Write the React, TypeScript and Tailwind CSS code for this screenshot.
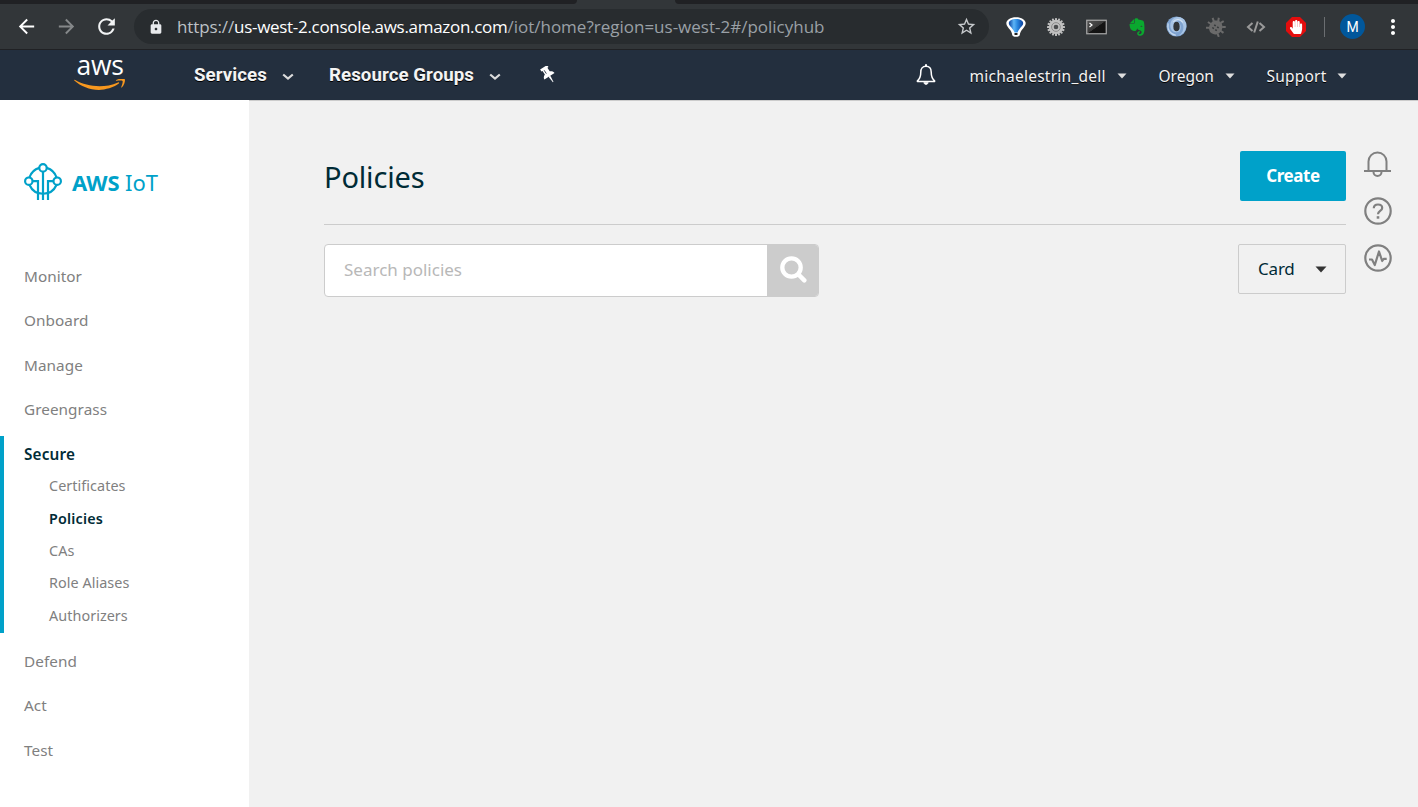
import React from "react";
import { MdArrowBack, MdArrowForward, MdRefresh, MdLock, MdStarBorder, MdMoreVert } from "react-icons/md";
import { FaEvernote, FaHandPaper } from "react-icons/fa";

function BalloonIcon() {
  return (
    <svg width="20" height="20" viewBox="0 0 20 20">
      <defs>
        <linearGradient id="balloon" x1="0" x2="1">
          <stop offset="0" stopColor="#0a3f9c" />
          <stop offset="0.35" stopColor="#5db5f7" />
          <stop offset="0.6" stopColor="#2a86de" />
          <stop offset="1" stopColor="#0a3f9c" />
        </linearGradient>
      </defs>
      <path d="M10 .2C4.500 .2 .3 2.900 .3 6.300c0 2.300 2 4.500 3.700 6.500 1 1.300 1.900 2.900 2.200 4.900.3 1.500 1.500 2.100 3.800 2.100s3.500-.6 3.800-2.100c.3-2 1.200-3.600 2.200-4.900 1.700-2 3.700-4.200 3.700-6.500C19.700 2.900 15.500.2 10 .2z" fill="#fff" />
      <path d="M10 2C5.600 2 2.800 3.900 2.800 6.300c0 1.900 2 3.500 3.700 5.600 1 1.200 1.600 2.500 2 3.700h3c.4-1.200 1-2.500 2-3.700 1.700-2.100 3.700-3.700 3.700-5.600C17.200 3.900 14.400 2 10 2z" fill="url(#balloon)" />
      <rect x="8.500" y="16" width="3" height="2" fill="#222" />
    </svg>
  );
}

const spokes = [0, 22.5, 45, 67.5, 90, 112.5, 135, 157.5];

function GearIcon() {
  return (
    <svg width="20" height="20" viewBox="0 0 20 20">
      {spokes.map((a) => (
        <rect key={a} x="9" y="1" width="2" height="18" rx=".6" fill="#bdbdbd" transform={`rotate(${a} 10 10)`} />
      ))}
      <circle cx="10" cy="10" r="7.200" fill="#c0c0c0" />
      <circle cx="10" cy="10" r="4.400" fill="none" stroke="#8d8d8d" strokeWidth="1" />
      <circle cx="10" cy="10" r="2.300" fill="#4b4d4f" />
    </svg>
  );
}

function TerminalIcon() {
  return (
    <svg width="22" height="16" viewBox="0 0 22 16">
      <defs>
        <linearGradient id="term" x1="0" y1="0" x2="1" y2="1">
          <stop offset="0" stopColor="#555" />
          <stop offset=".5" stopColor="#3a3a3a" />
          <stop offset=".52" stopColor="#141414" />
          <stop offset="1" stopColor="#111" />
        </linearGradient>
      </defs>
      <rect x=".75" y="1.250" width="19.500" height="13.500" fill="url(#term)" stroke="#a9a9a9" strokeWidth="1.200" />
      <path d="M3.500 4 6 6 3.500 8" stroke="#fff" strokeWidth="1.200" fill="none" />
    </svg>
  );
}

function SwirlIcon() {
  return (
    <svg width="21" height="21" viewBox="0 0 20 20">
      <circle cx="10" cy="10" r="9.600" fill="#7fa3d0" />
      <path d="M13 14.500C9.500 17 5 15 4.200 10.500 3.500 6 6 2 10.500 1 17 .4 20 6 19.300 10.500 18 16 15 18 12 18.500c3.500-2 5-5 4.500-9C16 6 13 3.500 10 5c3 .5 4 3.500 4 5.500 0 1.500-.3 3-1 4z" fill="#a9c5e5" />
      <path d="M7 5.500C9.500 2.500 13.500 2.500 16 6" fill="none" stroke="#d3e2f2" strokeWidth="1.100" />
      <path d="M2 7c-1 6 2 10.500 7.500 11.300" fill="none" stroke="#c6d9ee" strokeWidth="1.100" />
      <ellipse cx="10" cy="10" rx="3" ry="4.600" fill="#323639" />
    </svg>
  );
}

function DebugBugIcon() {
  return (
    <svg width="20" height="20" viewBox="0 0 20 20">
      <g transform="rotate(35 10 10)" fill="#6a6a6a" stroke="#6a6a6a">
        <ellipse cx="10" cy="10.500" rx="6.500" ry="7.200" stroke="none" />
        <path d="M2 4.500l3 2M18 4.500l-3 2M.5 10.500H5M15 10.500H19.500M2 16.500l3-2M18 16.500l-3-2M7 .8l1.500 3.200M13 .8l-1.500 3.200" strokeWidth="2" />
        <path d="M7.300 9.200h1.800M10.900 9.200h1.800M7.300 12.500h1.800M10.900 12.500h1.800" stroke="#35383a" strokeWidth="1.500" />
      </g>
    </svg>
  );
}

function CodeIcon() {
  return (
    <svg width="20" height="14" viewBox="0 0 20 14" fill="none" stroke="#9a9a9a" strokeWidth="2">
      <path d="M6.500 3 2 7l4.500 4M13.500 3 18 7l-4.500 4M11.800 1.500 8.200 12.500" />
    </svg>
  );
}

function BlockIcon() {
  return (
    <span className="relative flex h-[20px] w-[20px] items-center justify-center">
      <svg className="absolute inset-0" width="20" height="20" viewBox="0 0 20 20">
        <path d="M6 0h8l6 6v8l-6 6H6l-6-6V6z" fill="#e40d0d" />
      </svg>
      <FaHandPaper className="relative text-white" size={14} />
    </span>
  );
}

function HeaderBell() {
  return (
    <svg width="20" height="22" viewBox="0 0 20 22" fill="none" stroke="#fff" strokeWidth="1.500" strokeLinejoin="round">
      <path d="M10 2.200c-3.600 0-5.200 2.600-5.200 5.800 0 4.500-1 6.800-3.400 8.800v.7h17.200v-.7c-2.400-2-3.400-4.300-3.400-8.800 0-3.200-1.600-5.800-5.200-5.800z" />
      <path d="M10 .3v2" strokeWidth="2" />
      <path d="M7.800 18.500c.3 1.400 1.100 2 2.200 2s1.900-.6 2.200-2z" fill="#fff" strokeWidth=".6" />
    </svg>
  );
}

function PinIcon() {
  return (
    <svg width="17" height="18" viewBox="0 0 17 18">
      <g transform="rotate(-33 8 8)" fill="#fff">
        <path d="M3.800 0h8.400v2.400h-1.300v4.300c2 .8 3.100 2.100 3.100 4H2c0-1.900 1.100-3.200 3.100-4V2.400H3.800z" />
        <path d="M7 10.500h2L8.300 17.500h-.6z" />
        <path d="M6.800 2.800v4" stroke="#232f3e" strokeWidth=".8" />
      </g>
    </svg>
  );
}

function Chevron() {
  return (
    <svg width="12" height="8" viewBox="0 0 12 8" fill="none">
      <path d="M1.200 1.500 6 5.600l4.800-4.100" stroke="#dcdcdc" strokeWidth="2.200" />
    </svg>
  );
}

function Caret() {
  return (
    <svg width="10" height="6" viewBox="0 0 10 6" className="mt-[2px]">
      <path d="M.5.500h9L5 5.500z" fill="#dedede" />
    </svg>
  );
}

function AwsLogo() {
  return (
    <div className="flex w-[52px] flex-col items-center">
      <span className="-mt-px h-[23px] font-['Open_Sans',sans-serif] text-[26.5px] leading-[19px] font-medium tracking-[-0.3px] text-white">aws</span>
      <svg width="52" height="14" viewBox="0 0 52 14" fill="#f7981f">
        <path d="M.3 1.600C-.1 1.200.4.600 1.200 1c7 4 15.500 6.200 24.300 6.200 6 0 12.500-1.200 18.500-3.800 .9-.4 1.700.6.800 1.200-5.400 4-13.200 6.300-19.900 6.300C15.500 10.900 6.800 7.500.3 1.600z" />
        <path d="M46.500 2.200c-.7-.9-4.500-.4-6.200-.2-.5.1-.6-.4-.1-.7 3-2.100 8-1.500 8.600-.8.600.7-.2 5.700-3 8.100-.4.400-.8.200-.6-.3.600-1.600 2-5.200 1.300-6.100z" transform="translate(2 -.2)" />
      </svg>
    </div>
  );
}

function IotLogo() {
  return (
    <svg width="38" height="38" viewBox="0 0 38 38" fill="none" stroke="#00a1c9" strokeWidth="2.200">
      <path d="M15.300 4.900A14.800 14.800 0 0 0 5.500 14.400M22.700 4.900A14.800 14.800 0 0 1 32.500 14.400M5.500 22A14.800 14.800 0 0 0 32.500 22" />
      <circle cx="19" cy="4.900" r="3.700" />
      <circle cx="4.800" cy="18.200" r="3.700" />
      <circle cx="33.200" cy="18.200" r="3.700" />
      <path d="M19 8.300V37M8.100 18.200h5.900V37M29.900 18.200H24V37" />
    </svg>
  );
}

function SideBell() {
  return (
    <svg width="27" height="27" viewBox="0 0 27 27" fill="none" stroke="#808080" strokeWidth="2">
      <path d="M4.500 20V10.500a9 9 0 0 1 18 0V20M0 20h27" />
      <path d="M9.500 21a4 4 0 0 0 8 0" />
    </svg>
  );
}

function SideHelp() {
  return (
    <svg width="28" height="28" viewBox="0 0 28 28" fill="none" stroke="#808080" strokeWidth="2.200">
      <circle cx="14" cy="14" r="12.700" />
      <path d="M9.800 11.200c0-2.400 1.800-3.700 4.200-3.700s4.200 1.300 4.200 3.500c0 3-4.200 3-4.200 6.200" />
      <path d="M14 19.200v2.500" strokeWidth="2.600" />
    </svg>
  );
}

function SidePulse() {
  return (
    <svg width="28" height="28" viewBox="0 0 28 28" fill="none" stroke="#808080" strokeWidth="2.200">
      <circle cx="14" cy="14" r="12.700" />
      <path d="M5 15.500h3L10.800 21 15 7.500l3.200 9.500 1.500-2.200h3" strokeLinejoin="round" />
    </svg>
  );
}

function Toolbar() {
  return (
    <div className="flex h-[45px] items-center bg-[#323639]">
      <div className="flex w-[134px] items-center pl-[15px]">
        <MdArrowBack size={23} className="-mt-px text-white" />
        <MdArrowForward size={23} className="-mt-px ml-[17px] text-[#85888a]" />
        <MdRefresh size={25} className="-mt-px ml-[16px] text-[#f1f3f4]" />
      </div>
      <div className="flex h-[35px] w-[855px] items-center rounded-full bg-[#282c2f] pr-[12px] pl-[14px]">
        <MdLock size={16} className="text-[#e8eaed]" />
        <span className="ml-[13px] flex-1 font-['Open_Sans',sans-serif] text-[17px] leading-[24px] whitespace-nowrap text-[#9aa0a6]">
          <span className="tracking-[-0.12px] text-[#bdc1c6]">https://</span>
          <span className="tracking-[-0.3px] text-white">us-west-2.console.aws.amazon.com</span>
          <span className="tracking-[0]">/iot/home?region=us-west-2#/policyhub</span>
        </span>
        <MdStarBorder size={21} className="text-[#c6c9cc]" />
      </div>
      <div className="ml-[17px] flex items-center">
        <div className="flex w-[40px] items-center"><BalloonIcon /></div>
        <div className="flex w-[40px] items-center"><GearIcon /></div>
        <div className="flex w-[41px] items-center"><TerminalIcon /></div>
        <div className="flex w-[39px] items-center"><FaEvernote size={20} className="text-[#0aa82f]" /></div>
        <div className="flex w-[40px] items-center"><SwirlIcon /></div>
        <div className="flex w-[40px] items-center"><DebugBugIcon /></div>
        <div className="flex w-[40px] items-center"><CodeIcon /></div>
        <BlockIcon />
        <div className="ml-[18px] h-[20px] w-px bg-[#6b6e71]" />
        <div className="ml-[15px] flex h-[25px] w-[25px] items-center justify-center rounded-full bg-[#01579b] pt-px font-[Roboto,sans-serif] text-[14px] text-white">M</div>
        <MdMoreVert size={24} className="ml-[16px] text-white" />
      </div>
    </div>
  );
}

function ConsoleHeader() {
  return (
    <div className="flex h-[51px] items-center border-t border-[#202124] bg-[#232f3e] font-[Roboto,sans-serif] text-[18px] font-bold text-[#f4f4f4]">
      <div className="ml-[74px]"><AwsLogo /></div>
      <span className="ml-[68px] w-[88px] text-[18.7px] tracking-[0.05px] [text-shadow:0_1px_0_#000]">Services</span>
      <div className="mt-[3px]"><Chevron /></div>
      <span className="ml-[35px] w-[160px] text-[18.7px] tracking-[0.05px] [text-shadow:0_1px_0_#000]">Resource Groups</span>
      <div className="mt-[3px]"><Chevron /></div>
      <div className="ml-[39px]"><PinIcon /></div>
      <div className="flex-1" />
      <div className="flex w-[502px] items-center font-['Noto_Sans',sans-serif] text-[15.5px] font-normal text-[#f4f4f4] [text-shadow:0_1px_0_#000]">
        <HeaderBell />
        <span className="mt-[4px] ml-[33.5px] w-[147px] tracking-[0.25px]">michaelestrin_dell</span>
        <Caret />
        <span className="mt-[4px] ml-[32px] w-[66px]">Oregon</span>
        <Caret />
        <span className="mt-[4px] ml-[32px] w-[70.5px] tracking-[0.2px]">Support</span>
        <Caret />
      </div>
    </div>
  );
}

const topItems = ["Monitor", "Onboard", "Manage", "Greengrass"];
const subItems = ["Certificates", "Policies", "CAs", "Role Aliases", "Authorizers"];
const bottomItems = ["Defend", "Act", "Test"];

function NavRow({ label }: { label: string }) {
  return (
    <a className="flex h-[44.5px] items-center pl-[24px] text-[15.3px] tracking-[0.05px] text-[#808080]">{label}</a>
  );
}

function Sidebar() {
  return (
    <nav className="w-[249px] shrink-0 bg-white font-['Noto_Sans',sans-serif]">
      <div className="flex items-center pt-[63px] pl-[24px]">
        <IotLogo />
        <span className="ml-[10px] text-[22px] leading-[38px] tracking-[-0.1px] text-[#00a1c9]"><b>AWS</b> IoT</span>
      </div>
      <div className="mt-[53px]">
        {topItems.map((i) => <NavRow key={i} label={i} />)}
      </div>
      <div className="mt-[4px] h-[197px] border-l-4 border-[#00a1c9]">
        <div className="flex h-[34px] items-center pt-[3px] pl-[20px] text-[15.3px] font-semibold tracking-[0.15px] text-[#002b36]">Secure</div>
        {subItems.map((i) => (
          <a key={i} className={i === "Policies" ? "flex h-[32.5px] items-center pb-px pl-[45px] text-[14.3px] font-semibold tracking-[0.2px] text-[#002b36]" : "flex h-[32.5px] items-center pb-px pl-[45px] text-[14.4px] tracking-[0.05px] text-[#808080]"}>
            {i}
          </a>
        ))}
      </div>
      <div className="mt-[6px]">
        {bottomItems.map((i) => <NavRow key={i} label={i} />)}
      </div>
    </nav>
  );
}

function Content() {
  return (
    <main className="flex flex-1 border-t border-[#cccccc] bg-[#f1f1f1] pt-[50px] pl-[75px] font-['Noto_Sans',sans-serif] text-[#002b36]">
      <div className="w-[1022px]">
        <div className="flex h-[74px] items-start justify-between border-b border-[#cccccc]">
          <h1 className="text-[29px] leading-[52px] tracking-[-0.15px]">Policies</h1>
          <button className="h-[50px] w-[106px] rounded-[2px] bg-[#00a1c9] text-[17px] font-bold tracking-[-0.45px] text-white">Create</button>
        </div>
        <div className="mt-[19px] flex items-start justify-between">
          <div className="flex h-[53px] w-[495px] overflow-hidden rounded-[4px] border border-[#cccccc] bg-white">
            <div className="flex flex-1 items-center pb-[2px] pl-[19px] text-[17px] text-[#b8b8b8]">Search policies</div>
            <div className="flex w-[51px] justify-center bg-[#cccccc] pt-[10px]">
              <svg width="28" height="28" viewBox="0 0 28 28" fill="none" stroke="#fff">
                <circle cx="12.500" cy="12.500" r="9.200" strokeWidth="4.300" />
                <path d="M19.500 19.500 25.300 25.300" strokeWidth="4.500" strokeLinecap="round" />
              </svg>
            </div>
          </div>
          <div className="flex h-[50px] w-[108px] items-center rounded-[2px] border border-[#cccccc] pl-[19px] text-[17px]">
            <span className="w-[57px] tracking-[-0.2px]">Card</span>
            <svg width="12" height="7" viewBox="0 0 12 7"><path d="M.5.500h11L6 6.500z" fill="#333" /></svg>
          </div>
        </div>
      </div>
      <div className="flex w-[63px] flex-col items-center gap-[19px]">
        <SideBell />
        <SideHelp />
        <SidePulse />
      </div>
    </main>
  );
}

export default function App() {
  return (
    <div className="flex h-[807px] w-[1418px] flex-col overflow-hidden bg-[#f1f1f1]">
      <div className="flex h-[4px] shrink-0 bg-[#323639]">
        <div className="w-[577px] rounded-br-[4px] bg-[#202124]" />
        <div className="w-[98px]" />
        <div className="flex-1 rounded-bl-[4px] bg-[#202124]" />
      </div>
      <Toolbar />
      <ConsoleHeader />
      <div className="flex flex-1">
        <Sidebar />
        <Content />
      </div>
    </div>
  );
}
